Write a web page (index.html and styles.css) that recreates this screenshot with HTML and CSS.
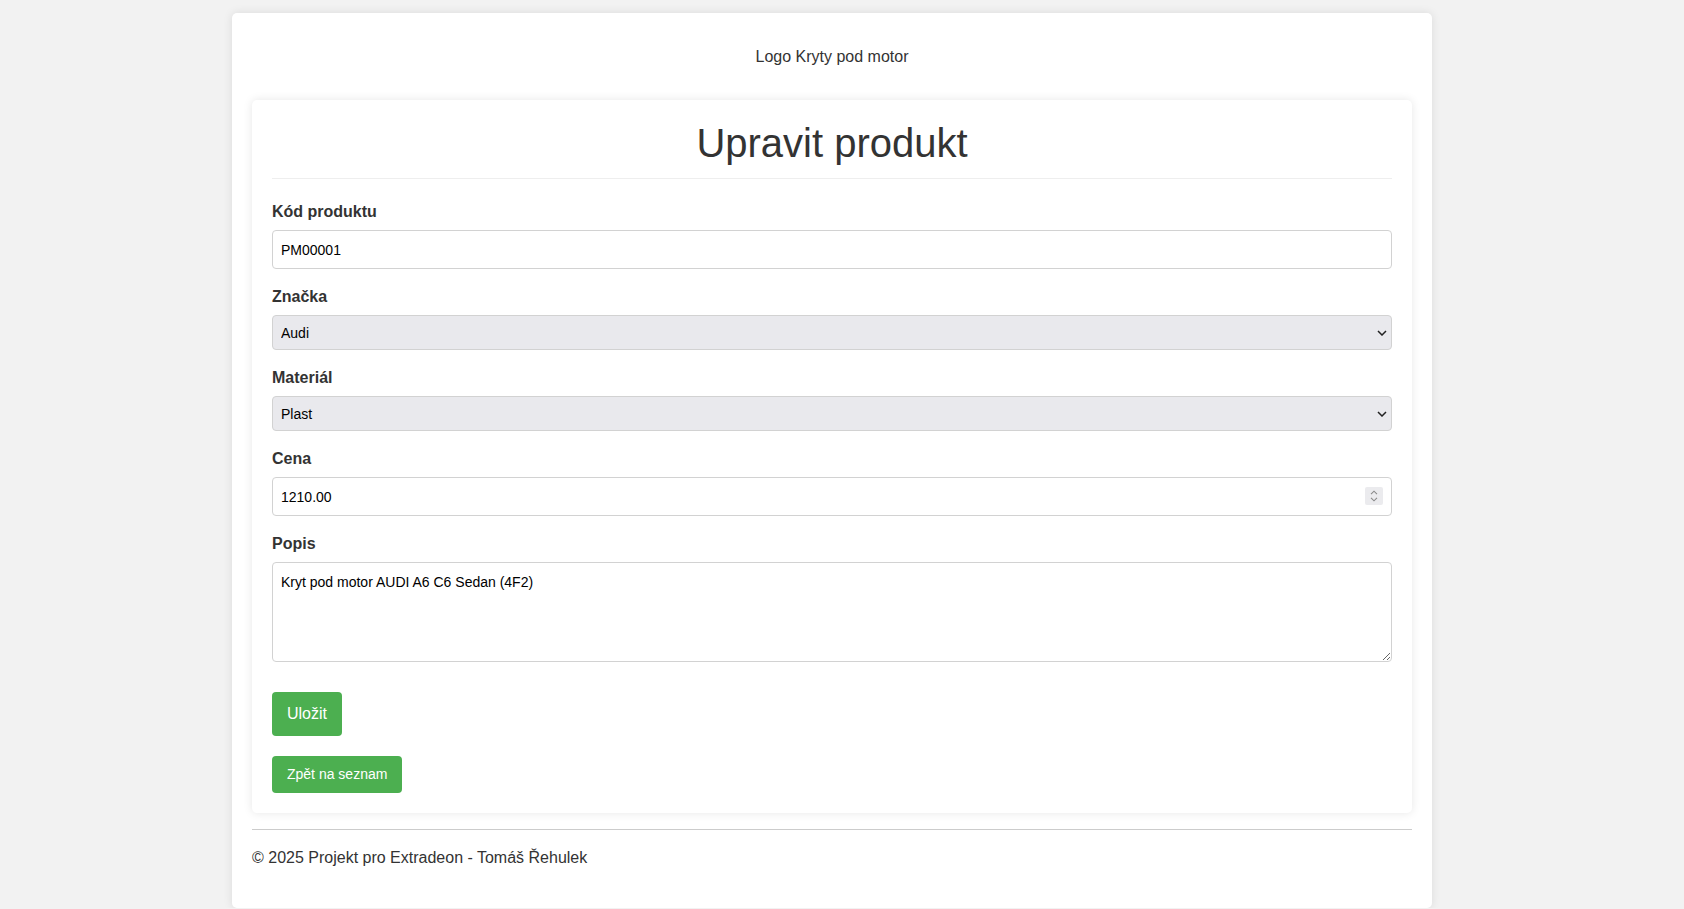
FILE: index.html
```html
<!DOCTYPE html>
<html lang="cs">
<head>
<meta charset="utf-8">
<title>Upravit produkt</title>
<link rel="stylesheet" href="styles.css">
</head>
<body>
<div class="container">
  <header class="site-header">
    <div class="logo">Logo Kryty pod motor</div>
  </header>

  <main class="card">
    <h1 class="card-title">Upravit produkt</h1>
    <form class="form">
      <div class="field">
        <label class="label" for="kod">Kód produktu</label>
        <input class="input" id="kod" type="text" value="PM00001">
      </div>
      <div class="field">
        <label class="label" for="znacka">Značka</label>
        <div class="select-wrap">
          <select class="select" id="znacka">
            <option>Audi</option>
          </select>
          <svg class="select-arrow" width="10" height="6" viewBox="0 0 10 6"><path d="M1 1l4 4 4-4" fill="none" stroke="#222" stroke-width="1.5"/></svg>
        </div>
      </div>
      <div class="field">
        <label class="label" for="material">Materiál</label>
        <div class="select-wrap">
          <select class="select" id="material">
            <option>Plast</option>
          </select>
          <svg class="select-arrow" width="10" height="6" viewBox="0 0 10 6"><path d="M1 1l4 4 4-4" fill="none" stroke="#222" stroke-width="1.5"/></svg>
        </div>
      </div>
      <div class="field">
        <label class="label" for="cena">Cena</label>
        <div class="number-wrap">
          <input class="input input-number" id="cena" type="number" step="0.01" value="1210.00">
          <span class="spinner">
            <svg width="8" height="5" viewBox="0 0 8 5"><path d="M1 4.2l3-3 3 3" fill="none" stroke="#8a8a8a" stroke-width="1.1"/></svg>
            <svg width="8" height="5" viewBox="0 0 8 5"><path d="M1 0.8l3 3 3-3" fill="none" stroke="#8a8a8a" stroke-width="1.1"/></svg>
          </span>
        </div>
      </div>
      <div class="field">
        <label class="label" for="popis">Popis</label>
        <textarea class="textarea" id="popis">Kryt pod motor AUDI A6 C6 Sedan (4F2)</textarea>
      </div>
      <button class="btn btn-save" type="button">Uložit</button>
    </form>
    <a class="btn btn-back" href="#">Zpět na seznam</a>
  </main>

  <footer class="site-footer">
    <p class="footer-text">© 2025 Projekt pro Extradeon - Tomáš Řehulek</p>
  </footer>
</div>
</body>
</html>
```

FILE: styles.css
```css
* {
  box-sizing: border-box;
}

html, body {
  margin: 0;
  padding: 0;
}

body {
  background: #f2f2f2;
  font-family: "Liberation Sans", Arial, sans-serif;
  color: #333;
  font-size: 16px;
  padding-right: 20px;
}

.container {
  width: 1200px;
  margin: 13px auto 0;
  padding: 20px;
  background: #fff;
  border-radius: 5px;
  box-shadow: 0 0 10px rgba(0, 0, 0, 0.1);
}

.site-header {
  padding: 15px 0;
  text-align: center;
}

.logo {
  font-size: 16px;
  line-height: 18px;
  color: #333;
}

.card {
  margin-top: 19px;
  padding: 20px;
  background: #fff;
  border-radius: 5px;
  box-shadow: 0 0 10px rgba(0, 0, 0, 0.1);
}

.card-title {
  margin: 0;
  padding-bottom: 12px;
  border-bottom: 1px solid #eee;
  font-size: 40px;
  line-height: 46px;
  font-weight: normal;
  text-align: center;
  color: #333;
}

.form {
  margin-top: 24px;
}

.field {
  margin-bottom: 19px;
}

.label {
  display: block;
  margin-bottom: 9px;
  font-weight: bold;
  font-size: 16px;
  line-height: 18px;
  color: #333;
}

.input,
.select,
.textarea {
  display: block;
  width: 100%;
  margin: 0;
  font-family: "Liberation Sans", Arial, sans-serif;
  font-size: 14px;
  color: #000;
  border: 1px solid #d2d2d2;
  border-radius: 4px;
  outline: none;
}

.input {
  height: 39px;
  padding: 10px 8px;
  background: #fff;
}

.number-wrap {
  position: relative;
}

.input-number {
  -moz-appearance: textfield;
  appearance: textfield;
}

.input-number::-webkit-inner-spin-button,
.input-number::-webkit-outer-spin-button {
  -webkit-appearance: none;
  margin: 0;
}

.spinner {
  position: absolute;
  right: 9px;
  top: 10px;
  width: 18px;
  height: 18px;
  background: #ebebee;
  border-radius: 2px;
  display: flex;
  flex-direction: column;
  align-items: center;
  justify-content: center;
  gap: 2px;
}

.spinner svg {
  display: block;
}

.select-wrap {
  position: relative;
}

.select {
  height: 35px;
  padding: 0 8px;
  background: #e9e9ed;
  -webkit-appearance: none;
  appearance: none;
}

.select-arrow {
  position: absolute;
  right: 5px;
  top: 15px;
  pointer-events: none;
}

.textarea {
  height: 100px;
  padding: 11px 8px 10px;
  background: #fff;
  resize: both;
  line-height: 16px;
}

.btn {
  display: inline-block;
  background: #4caf50;
  color: #fff;
  border: none;
  border-radius: 4px;
  font-family: "Liberation Sans", Arial, sans-serif;
  text-decoration: none;
  cursor: pointer;
}

.btn-save {
  margin-top: 11px;
  padding: 13px 15px;
  font-size: 16px;
  line-height: 18px;
}

.btn-back {
  margin-top: 20px;
  padding: 10px 15px;
  font-size: 14px;
  line-height: 17px;
}

.card > .btn-back {
  display: table;
}

.site-footer {
  margin-top: 16px;
  border-top: 1px solid #ccc;
  padding: 19px 0 21px;
}

.footer-text {
  margin: 0;
  font-size: 16px;
  line-height: 18px;
  color: #333;
}
```
